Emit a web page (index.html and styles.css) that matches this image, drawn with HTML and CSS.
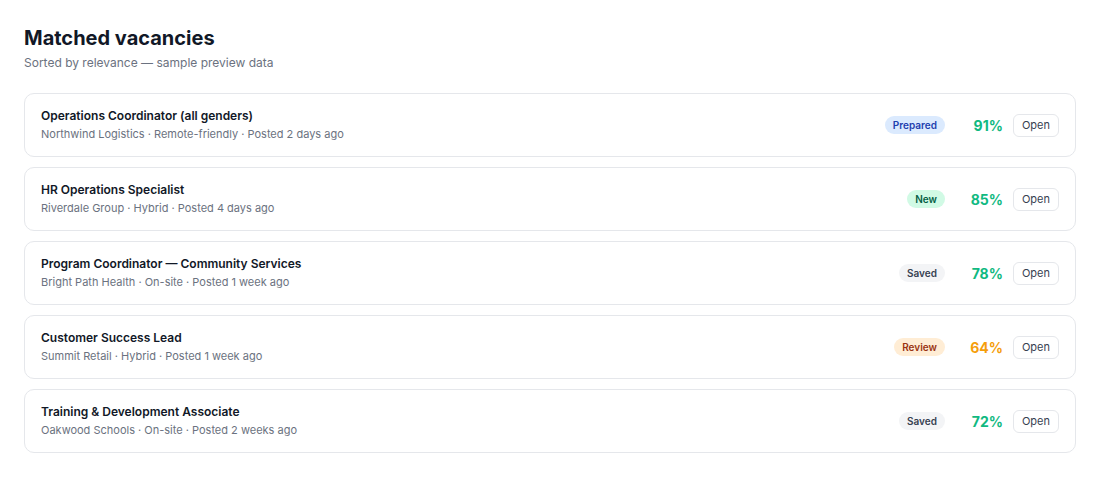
FILE: index.html
```html
<!DOCTYPE html>
<html lang="en">
<head>
  <meta charset="UTF-8">
  <title>Matched vacancies</title>
  <link rel="stylesheet" href="styles.css">
</head>
<body>

  <div class="page">
    <h1>Matched vacancies</h1>
    <p class="subtitle">Sorted by relevance — sample preview data</p>

    <ul class="vacancies">
      <li class="vacancy">
        <div class="info">
          <div class="title">Operations Coordinator (all genders)</div>
          <div class="meta">Northwind Logistics · Remote-friendly · Posted 2 days ago</div>
        </div>
        <div class="side">
          <span class="badge prepared">Prepared</span>
          <span class="score good">91%</span>
          <button class="open-btn">Open</button>
        </div>
      </li>
      <li class="vacancy">
        <div class="info">
          <div class="title">HR Operations Specialist</div>
          <div class="meta">Riverdale Group · Hybrid · Posted 4 days ago</div>
        </div>
        <div class="side">
          <span class="badge new">New</span>
          <span class="score good">85%</span>
          <button class="open-btn">Open</button>
        </div>
      </li>
      <li class="vacancy">
        <div class="info">
          <div class="title">Program Coordinator — Community Services</div>
          <div class="meta">Bright Path Health · On-site · Posted 1 week ago</div>
        </div>
        <div class="side">
          <span class="badge saved">Saved</span>
          <span class="score good">78%</span>
          <button class="open-btn">Open</button>
        </div>
      </li>
      <li class="vacancy">
        <div class="info">
          <div class="title">Customer Success Lead</div>
          <div class="meta">Summit Retail · Hybrid · Posted 1 week ago</div>
        </div>
        <div class="side">
          <span class="badge review">Review</span>
          <span class="score fair">64%</span>
          <button class="open-btn">Open</button>
        </div>
      </li>
      <li class="vacancy">
        <div class="info">
          <div class="title">Training &amp; Development Associate</div>
          <div class="meta">Oakwood Schools · On-site · Posted 2 weeks ago</div>
        </div>
        <div class="side">
          <span class="badge saved">Saved</span>
          <span class="score good">72%</span>
          <button class="open-btn">Open</button>
        </div>
      </li>
    </ul>
  </div>

</body>
</html>
```

FILE: styles.css
```css
/* Base */
* { box-sizing: border-box; margin: 0; padding: 0; }
body {
  font-family: Inter, "Noto Sans", sans-serif;
  background: #fff;
  color: #111827;
}

.page {
  padding: 24px;
}
h1 {
  font-size: 20px;
  line-height: 28px;
  font-weight: 700;
  color: #111827;
}
.subtitle {
  margin-top: 3px;
  font-size: 12px;
  line-height: 16px;
  color: #6b7280;
}

/* Vacancy list */
.vacancies {
  list-style: none;
  margin-top: 22px;
  display: flex;
  flex-direction: column;
  gap: 10px;
}
.vacancy {
  display: flex;
  align-items: center;
  justify-content: space-between;
  height: 64px;
  padding: 0 16px;
  border: 1px solid #e5e7eb;
  border-radius: 10px;
  background: #fff;
}
.title {
  font-size: 12px;
  line-height: 18px;
  font-weight: 600;
  color: #111827;
}
.meta {
  font-size: 11px;
  line-height: 18px;
  color: #6b7280;
}

.side {
  display: flex;
  align-items: center;
  gap: 10px;
}

/* Status pills */
.badge {
  font-size: 10px;
  line-height: 14px;
  font-weight: 600;
  padding: 2px 8px;
  border-radius: 999px;
}
.badge.prepared { background: #dbeafe; color: #1e40af; }
.badge.new { background: #d1fae5; color: #065f46; }
.badge.saved { background: #f3f4f6; color: #374151; }
.badge.review { background: #ffedd5; color: #9a3412; }

.score {
  min-width: 48px;
  text-align: right;
  font-size: 14px;
  font-weight: 700;
}
.score.good { color: #10b981; }
.score.fair { color: #f59e0b; }

.open-btn {
  font-family: inherit;
  font-size: 11px;
  line-height: 15px;
  color: #374151;
  background: #fff;
  border: 1px solid #e5e7eb;
  border-radius: 6px;
  padding: 3px 8px;
  cursor: pointer;
}
```
